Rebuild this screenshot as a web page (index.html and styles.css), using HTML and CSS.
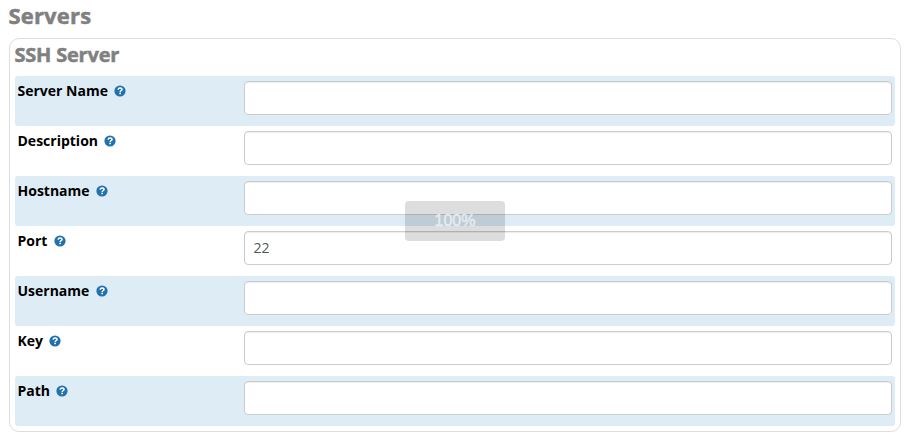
FILE: index.html
```html
<!DOCTYPE html>
<html lang="en">
<head>
    <meta charset="UTF-8">
    <meta name="viewport" content="width=device-width, initial-scale=1.0">
    <title>Servers</title>
    <link rel="stylesheet" href="styles.css">
</head>
<body>
    <svg width="0" height="0" class="sprite">
        <symbol id="help" viewBox="0 0 12 12">
            <circle cx="6" cy="6" r="5.6" fill="#1f72ad"/>
            <path d="M4.1 4.7C4.2 3.4 5 2.9 6.1 2.9c1.1 0 1.9.6 1.9 1.5 0 1.3-1.8 1.2-1.8 2.5" fill="none" stroke="#fff" stroke-width="1.5"/>
            <rect x="5.3" y="7.7" width="1.7" height="1.5" fill="#fff"/>
        </symbol>
    </svg>
    <h1>Servers</h1>
    <form class="panel">
        <h2>SSH Server</h2>
        <div class="row">
            <label for="name">Server Name <svg class="help"><use href="#help"/></svg></label>
            <input type="text" id="name">
        </div>
        <div class="row">
            <label for="description">Description <svg class="help"><use href="#help"/></svg></label>
            <input type="text" id="description">
        </div>
        <div class="row">
            <label for="hostname">Hostname <svg class="help"><use href="#help"/></svg></label>
            <input type="text" id="hostname">
        </div>
        <div class="row">
            <label for="port">Port <svg class="help"><use href="#help"/></svg></label>
            <input type="text" id="port" value="22">
        </div>
        <div class="row">
            <label for="username">Username <svg class="help"><use href="#help"/></svg></label>
            <input type="text" id="username">
        </div>
        <div class="row">
            <label for="key">Key <svg class="help"><use href="#help"/></svg></label>
            <input type="text" id="key">
        </div>
        <div class="row">
            <label for="path">Path <svg class="help"><use href="#help"/></svg></label>
            <input type="text" id="path">
        </div>
    </form>
    <div class="zoom-level">100%</div>
</body>
</html>
```
FILE: styles.css
```css
* {
    box-sizing: border-box;
}
body {
    margin: 0;
    padding: 1px 7px 0 9px;
    background: #fff;
    font-family: "Open Sans", Arial, sans-serif;
    font-size: 14px;
    color: #000;
    overflow: hidden;
}
.sprite {
    position: absolute;
}
h1, h2 {
    margin: 0 0 0 -0.6px;
    color: #808080;
    font-weight: bold;
    -webkit-text-stroke: 0.5px #808080;
}
h1 {
    height: 37px;
    font-size: 22px;
    line-height: 28px;
    letter-spacing: 0.2px;
}
h2 {
    height: 32px;
    font-size: 20px;
    line-height: 22px;
    letter-spacing: -0.2px;
}
.panel {
    height: 394px;
    padding: 5px;
    border: 1px solid #ddd;
    border-radius: 10px;
}
.row {
    display: flex;
    height: 50px;
    padding: 5px 3px 5px 2.5px;
    border-radius: 3px;
}
.row:nth-of-type(odd) {
    background: #deecf6;
}
.row label {
    width: 226.5px;
    font-weight: bold;
    line-height: 20px;
}
.help {
    width: 12px;
    height: 12px;
    margin-left: 2.8px;
    vertical-align: -1px;
}
.row input {
    flex: 1;
    height: 34px;
    padding: 5px 9px 7px 8.5px;
    border: 1px solid #ccc;
    border-radius: 4px;
    background: #fff;
    box-shadow: inset 0 1px 1px rgba(0, 0, 0, 0.075);
    font-family: inherit;
    font-size: 14px;
    color: #555;
}
.zoom-level {
    position: absolute;
    top: 201px;
    left: 405px;
    width: 100px;
    height: 40px;
    border-radius: 4px;
    background: rgba(0, 0, 0, 0.135);
    color: #e6edf2;
    -webkit-text-stroke: 0.4px #e6edf2;
    font-family: "Liberation Sans", Arial, sans-serif;
    font-size: 16px;
    line-height: 39px;
    text-align: center;
}
```
